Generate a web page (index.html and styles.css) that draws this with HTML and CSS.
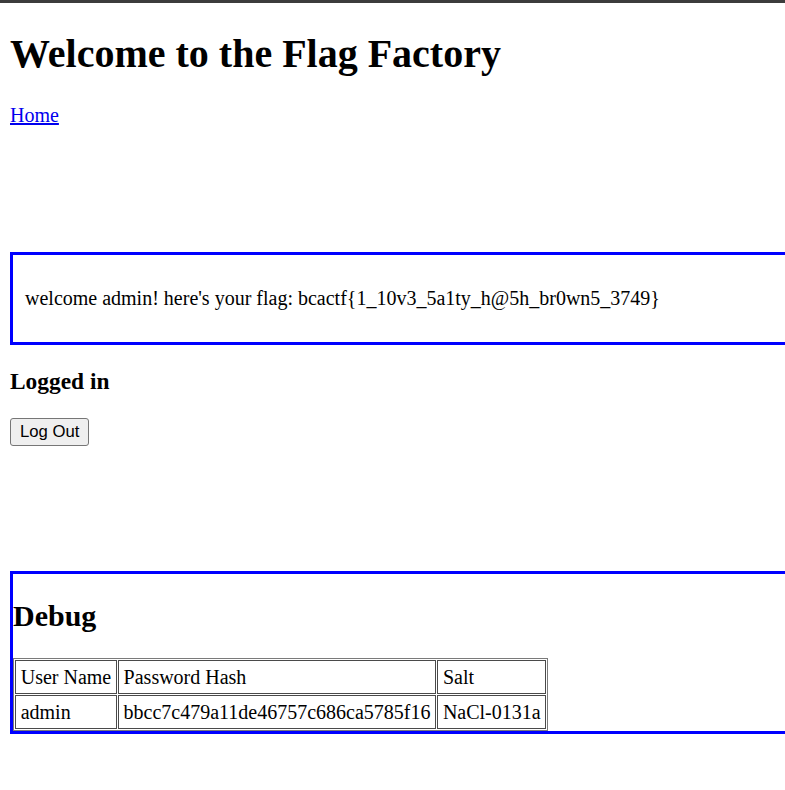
FILE: index.html
```html
<!DOCTYPE html>
<html>
<head>
<meta charset="utf-8">
<title>Flag Factory</title>
<link rel="stylesheet" href="styles.css">
</head>
<body>
<div class="topbar"></div>
<div class="page">
  <h1 class="title">Welcome to the Flag Factory</h1>
  <nav class="nav"><a href="#" class="nav-link">Home</a></nav>
  <div class="flag-box">
    <p class="flag-text">welcome admin! here's your flag: bcactf{1_10v3_5a1ty_h@5h_br0wn5_3749}</p>
  </div>
  <h3 class="status">Logged in</h3>
  <button class="logout">Log Out</button>
  <div class="debug-box">
    <h2 class="debug-title">Debug</h2>
    <table class="debug-table">
      <tr><td>User Name</td><td>Password Hash</td><td>Salt</td></tr>
      <tr><td>admin</td><td>bbcc7c479a11de46757c686ca5785f16</td><td>NaCl-0131a</td></tr>
    </table>
  </div>
</div>
</body>
</html>
```
FILE: styles.css
```css
html {
  overflow-x: hidden;
}
body {
  margin: 0;
  font-family: "Liberation Serif", "Times New Roman", serif;
  font-size: 20px;
  color: #000;
  background: #fff;
}
.topbar {
  height: 3px;
  background: #3c3c3c;
}
.page {
  padding: 0 10px 10px 10px;
}
.title {
  font-size: 40px;
  font-weight: bold;
  margin: 27px 0 27px 0;
}
.nav {
  margin-bottom: 125px;
}
.nav-link {
  color: #0000ee;
}
.flag-box {
  border: 3px solid #0000ff;
  padding: 12px 12px;
  width: 100%;
}
.flag-text {
  margin: 20px 0;
  padding-left: 0;
}
.status {
  font-size: 23.4px;
  font-weight: bold;
  margin: 23px 0;
}
.logout {
  font-family: "Liberation Sans", Arial, sans-serif;
  font-size: 16.7px;
  padding: 1px 9px;
  background: #efefef;
  border: 1px solid #767676;
  border-radius: 3px;
  color: #000;
  height: 28px;
  margin-bottom: 125px;
  display: block;
}
.debug-box {
  border: 3px solid #0000ff;
  width: calc(100% + 30px);
}
.debug-title {
  font-size: 30px;
  font-weight: bold;
  margin: 25px 0;
}
.debug-table {
  border: 1px solid #7a7a7a;
  border-spacing: 1px;
  margin-left: 0;
}
.debug-table td {
  border: 1px solid #4a4a4a;
  padding: 4.5px 4.7px;
  font-size: 20px;
  line-height: 23px;
}
```
